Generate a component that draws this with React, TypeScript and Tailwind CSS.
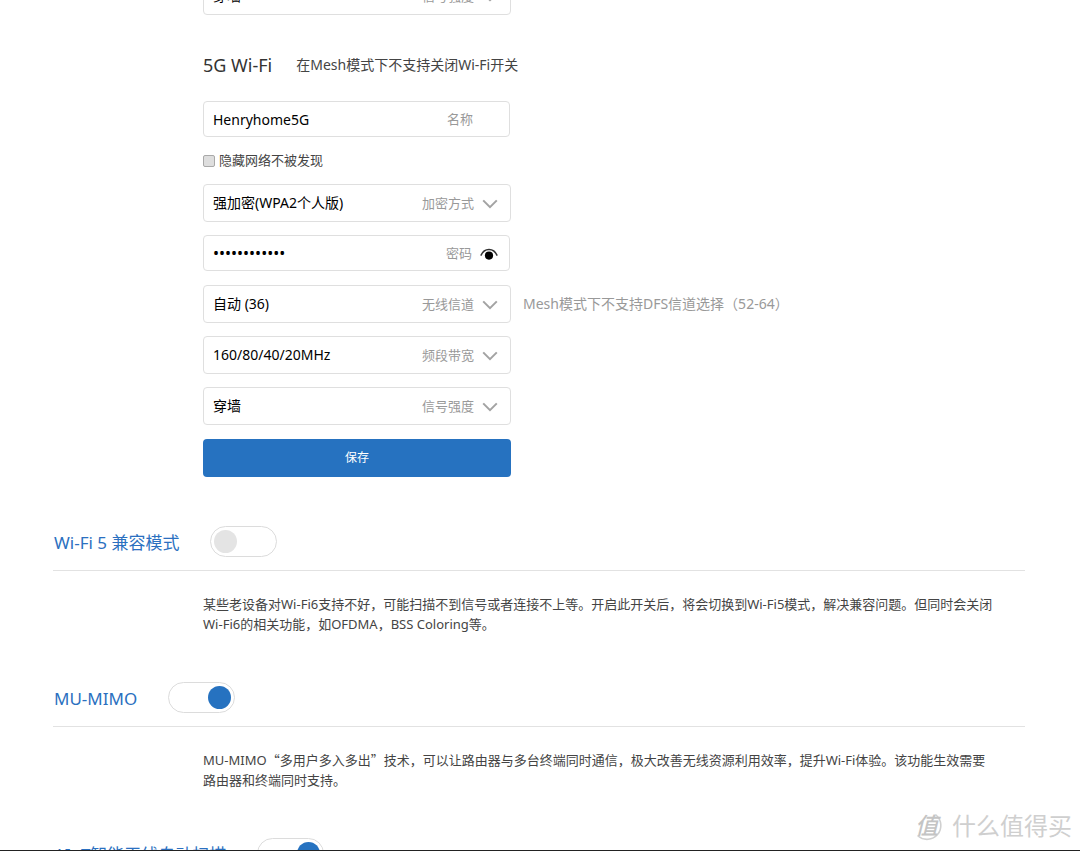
import React, { useState } from "react";

const fieldBox = "flex items-center rounded border border-[#dfdfdf] bg-white pl-[9px]";

function Chevron() {
    return (
        <svg className="pointer-events-none h-4 w-4 shrink-0" viewBox="0 0 16 16" fill="none" stroke="#a3a3a3" strokeWidth="2">
            <path d="M1.2 5.4 L8 12.2 L14.8 5.4" />
        </svg>
    );
}

function EyeIcon() {
    return (
        <svg className="h-4 w-[18px]" viewBox="0 0 18 16" fill="none">
            <path d="M0.8 10.6 C4.4 2.6 13.6 2.6 17.2 10.6" stroke="#333" strokeWidth="1.5" />
            <circle cx="9" cy="10.6" r="4.1" fill="#000" />
        </svg>
    );
}

function SelectField({ id, label, options }: { id: string; label: string; options: string[] }) {
    return (
        <div className={`${fieldBox} h-[38px] w-[308px] pr-3`}>
            <select id={id} className="h-full min-w-0 flex-1 appearance-none bg-transparent text-sm text-black outline-none">
                {options.map((option) => (
                    <option key={option}>{option}</option>
                ))}
            </select>
            <label htmlFor={id} className="mr-2 pt-0.5 text-[#999]">
                {label}
            </label>
            <Chevron />
        </div>
    );
}

function Toggle({ label, defaultChecked }: { label: string; defaultChecked?: boolean }) {
    return (
        <input
            type="checkbox"
            role="switch"
            aria-label={label}
            defaultChecked={defaultChecked}
            className="flex h-[31px] w-[67px] cursor-pointer appearance-none items-center rounded-full border border-[#dcdcdc] bg-white px-[3px] before:h-[23px] before:w-[23px] before:rounded-full before:bg-[#e4e4e4] checked:justify-end checked:before:bg-[#2672c0]"
        />
    );
}

function Section({ title, on, children }: { title: string; on?: boolean; children?: React.ReactNode }) {
    return (
        <section className="mb-12">
            <div className="mb-[23px] flex items-center gap-[31px] border-b border-[#e2e2e2] pb-[13px]">
                <h2 className="pt-0.5 pl-px text-[17px] leading-7 text-[#2b70c0]">{title}</h2>
                <Toggle label={title} defaultChecked={on} />
            </div>
            <p className="ml-[150px] leading-5 text-[#444]">{children}</p>
        </section>
    );
}

export default function App() {
    const [showPassword, setShowPassword] = useState(false);

    return (
        <div className="relative h-screen overflow-hidden border-b border-[#222] bg-white font-['Noto_Sans','Noto_Sans_CJK_SC',sans-serif] text-[13px]">
            <main className="mr-[55px] -mt-[23px] ml-[53px]">
                <form className="mb-[49px] ml-[150px] flex flex-col items-start gap-[13px]" onSubmit={(e) => e.preventDefault()}>
                    <SelectField id="signal-24g" label="信号强度" options={["穿墙", "标准", "节能"]} />

                    <div className="mt-[25px] mb-[11px] flex h-6 items-center gap-6">
                        <h3 className="text-lg text-[#333]">5G Wi-Fi</h3>
                        <span className="text-sm text-[#444]">在Mesh模式下不支持关闭Wi-Fi开关</span>
                    </div>

                    <div className={`${fieldBox} h-9 w-[307px] pr-9`}>
                        <input id="ssid" type="text" defaultValue="Henryhome5G" className="h-full min-w-0 flex-1 text-sm text-black outline-none" />
                        <label htmlFor="ssid" className="pt-0.5 text-[#999]">名称</label>
                    </div>

                    <label className="flex h-[21px] items-center gap-1 text-[#444]">
                        <input type="checkbox" className="h-3 w-3 appearance-none rounded-xs border border-[#a9a9a9] bg-[#dedede] checked:bg-[#2672c0]" />
                        隐藏网络不被发现
                    </label>

                    <SelectField id="encryption" label="加密方式" options={["强加密(WPA2个人版)", "无加密"]} />

                    <div className={`${fieldBox} h-9 w-[307px] pr-[11px]`}>
                        <input
                            id="password"
                            type={showPassword ? "text" : "password"}
                            defaultValue="henryhome123"
                            className="h-full min-w-0 flex-1 text-base text-black outline-none"
                        />
                        <label htmlFor="password" className="mr-2 pt-0.5 text-[#999]">密码</label>
                        <button type="button" aria-label="显示密码" onClick={() => setShowPassword(!showPassword)}>
                            <EyeIcon />
                        </button>
                    </div>

                    <div className="mt-px flex items-center gap-3">
                        <SelectField id="channel" label="无线信道" options={["自动 (36)", "36", "40", "44", "48"]} />
                        <span className="text-sm text-[#999]">Mesh模式下不支持DFS信道选择（52-64）</span>
                    </div>
                    <SelectField id="bandwidth" label="频段带宽" options={["160/80/40/20MHz", "80/40/20MHz", "20MHz"]} />
                    <SelectField id="signal-5g" label="信号强度" options={["穿墙", "标准", "节能"]} />

                    <button type="submit" className="mt-px h-[38px] w-[308px] rounded bg-[#2672c0] text-xs text-white">
                        保存
                    </button>
                </form>

                <Section title="Wi-Fi 5 兼容模式">
                    某些老设备对Wi-Fi6支持不好，可能扫描不到信号或者连接不上等。开启此开关后，将会切换到Wi-Fi5模式，解决兼容问题。但同时会关闭
                    <br />
                    Wi-Fi6的相关功能，如OFDMA，BSS Coloring等。
                </Section>
                <Section title="MU-MIMO" on>
                    MU-MIMO<span className="font-['Noto_Sans_CJK_SC',sans-serif]">“多用户多入多出”</span>
                    技术，可以让路由器与多台终端同时通信，极大改善无线资源利用效率，提升Wi-Fi体验。该功能生效需要
                    <br />
                    路由器和终端同时支持。
                </Section>
                <Section title="AIoT智能天线自动扫描" on />
            </main>

            {/* Site watermark */}
            <div className="pointer-events-none absolute right-2 bottom-2 flex items-center gap-2 text-[#cfcfcf]">
                <svg className="h-8 w-8" viewBox="0 0 32 32" fill="none">
                    <path d="M24 5 A13.5 13.5 0 1 1 6 26" stroke="#d0d0d0" strokeWidth="1.6" strokeLinecap="round" />
                    <text x="3" y="24" fontSize="23" fontWeight="500" fontStyle="italic" fill="#c4c4c4">
                        值
                    </text>
                </svg>
                <span className="text-2xl leading-8">什么值得买</span>
            </div>
        </div>
    );
}
